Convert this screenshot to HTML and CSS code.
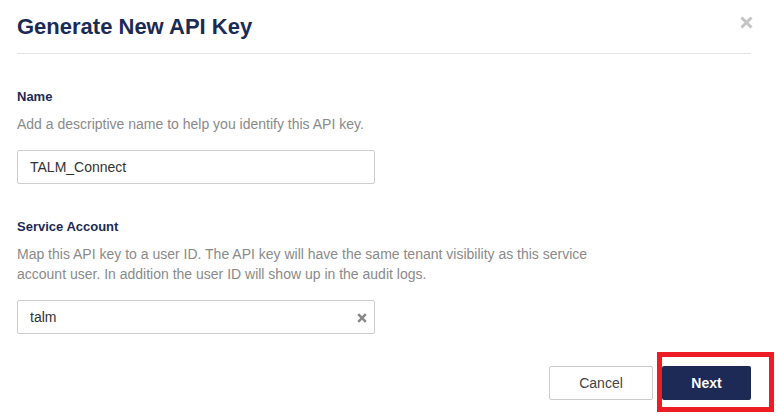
FILE: index.html
```html
<!DOCTYPE html>
<html>
<head>
<meta charset="utf-8">
<link rel="stylesheet" href="styles.css">
</head>
<body>
<div class="modal">
  <div class="modal-header">
    <h1 class="title">Generate New API Key</h1>
    <button class="close" aria-label="Close">
      <svg width="13" height="13" viewBox="0 0 13 13"><path d="M1.5 1.5L11.5 11.5M11.5 1.5L1.5 11.5" stroke="#c4c4c4" stroke-width="3" stroke-linecap="butt"/></svg>
    </button>
  </div>
  <div class="modal-body">
    <div class="field">
      <div class="label">Name</div>
      <div class="help">Add a descriptive name to help you identify this API key.</div>
      <div class="input">TALM_Connect</div>
    </div>
    <div class="field second">
      <div class="label">Service Account</div>
      <div class="help">Map this API key to a user ID. The API key will have the same tenant visibility as this service account user. In addition the user ID will show up in the audit logs.</div>
      <div class="input select">
        <span>talm</span>
        <svg class="clear" width="10" height="10" viewBox="0 0 10 10"><path d="M1.2 1.2L8.8 8.8M8.8 1.2L1.2 8.8" stroke="#888" stroke-width="2.4"/></svg>
      </div>
    </div>
  </div>
  <div class="modal-footer">
    <button class="btn btn-cancel">Cancel</button>
    <div class="next-wrap">
      <button class="btn btn-next">Next</button>
      <div class="highlight"></div>
    </div>
  </div>
</div>
</body>
</html>
```

FILE: styles.css
```css
* { box-sizing: border-box; }
html, body { margin: 0; padding: 0; background: #fff; }
body {
  font-family: "Liberation Sans", Arial, sans-serif;
  width: 778px;
  height: 418px;
  overflow: hidden;
}
.modal {
  padding: 0 27px 0 17px;
}
.modal-header {
  display: flex;
  justify-content: space-between;
  align-items: flex-start;
  padding: 14px 0 14px 0;
  border-bottom: 1px solid #e4e4e4;
}
.title {
  margin: 0;
  font-size: 22px;
  line-height: 25px;
  font-weight: bold;
  color: #1c2a56;
}
.close {
  border: 0;
  background: none;
  padding: 0;
  margin: 1px -2px 0 0;
  width: 14px;
  height: 14px;
  display: flex;
  align-items: center;
  justify-content: center;
}
.modal-body {
  padding-top: 35px;
}
.field.second { margin-top: 35px; }
.label {
  font-size: 13px;
  line-height: 16px;
  font-weight: bold;
  color: #1c2a56;
}
.help {
  margin-top: 9px;
  font-size: 14px;
  line-height: 20px;
  color: #8a8a8a;
  width: 590px;
}
.input {
  margin-top: 16px;
  width: 358px;
  height: 34px;
  border: 1px solid #cfcfcf;
  border-radius: 2px;
  padding: 0 12px;
  display: flex;
  align-items: center;
  font-size: 14px;
  color: #333;
}
.input.select { justify-content: space-between; padding-right: 7px; }
.clear { margin-top: 2px; }
.modal-footer {
  display: flex;
  justify-content: flex-end;
  gap: 9px;
  margin-top: 32px;
}
.btn {
  height: 34px;
  font-family: "Liberation Sans", Arial, sans-serif;
  font-size: 14px;
  border-radius: 2px;
  cursor: pointer;
}
.btn-cancel {
  width: 104px;
  background: #fff;
  border: 1px solid #cccccc;
  color: #444;
}
.next-wrap { position: relative; }
.btn-next {
  width: 89px;
  background: #1c2a55;
  border: 0;
  color: #fff;
  font-weight: bold;
}
.highlight {
  position: absolute;
  left: -5px;
  top: -14px;
  width: 117px;
  height: 60px;
  border: 5px solid #ee1c24;
  pointer-events: none;
}
```
